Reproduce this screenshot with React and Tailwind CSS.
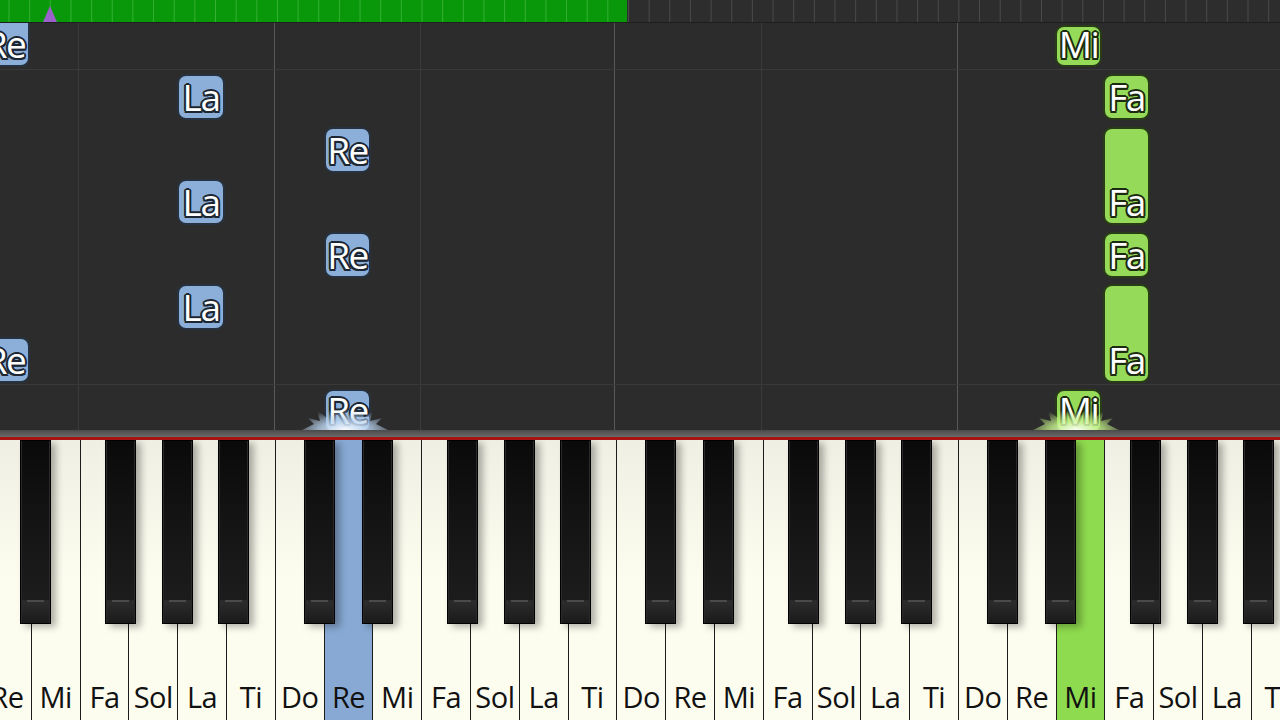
import React from "react";

const KEY_W = 48.8;
const KEY_START = -18;
const WHITE_NAMES = ["Re", "Mi", "Fa", "Sol", "La", "Ti", "Do"];

// pressed keys: index -> colour
const PRESSED = { 7: "blue", 22: "green" };

// notes in screen coordinates (x, width, y1, y2)
const notes = [
  { n: "Re", c: "blue", x: -20, w: 50, y1: -10, y2: 67 },
  { n: "La", c: "blue", x: 177, w: 48, y1: 74, y2: 120 },
  { n: "Re", c: "blue", x: 324, w: 47, y1: 127, y2: 173 },
  { n: "La", c: "blue", x: 177, w: 48, y1: 179, y2: 225 },
  { n: "Re", c: "blue", x: 324, w: 47, y1: 232, y2: 278 },
  { n: "La", c: "blue", x: 177, w: 48, y1: 284, y2: 330 },
  { n: "Re", c: "blue", x: -20, w: 50, y1: 337, y2: 383 },
  { n: "Re", c: "blue", x: 324, w: 47, y1: 389, y2: 433 },
  { n: "Mi", c: "green", x: 1055, w: 47, y1: 25, y2: 67 },
  { n: "Fa", c: "green", x: 1103, w: 47, y1: 74, y2: 120 },
  { n: "Fa", c: "green", x: 1103, w: 47, y1: 127, y2: 225 },
  { n: "Fa", c: "green", x: 1103, w: 47, y1: 232, y2: 278 },
  { n: "Fa", c: "green", x: 1103, w: 47, y1: 284, y2: 383 },
  { n: "Mi", c: "green", x: 1055, w: 47, y1: 389, y2: 433 },
];

const ROLL_TOP = 23;

const TopBar = () => {
  const ticks = [];
  for (let i = 0; i < 62; i++) ticks.push(9 + i * 20.65);
  return (
    <div className="h-[23px] bg-[#2b2b2b] shrink-0">
      <svg width="1280" height="23" className="block">
        <rect x="0" y="0" width="627" height="22" fill="#099809" />
        <rect x="627" y="0" width="653" height="22" fill="#2d2d2d" />
        {ticks.map((t, i) => (
          <line
            key={i}
            x1={t}
            x2={t}
            y1="0"
            y2="22"
            stroke={t < 627 ? "#36b036" : "#4a4a4a"}
            strokeWidth="1"
          />
        ))}
        <rect x="0" y="22" width="1280" height="1" fill="#1e1e1e" />
        <polygon points="43,22 50,6 57,22" fill="#9b62cc" />
      </svg>
    </div>
  );
};

const Note = ({ note }) => {
  const blue = note.c === "blue";
  return (
    <div
      className={
        "absolute rounded-[9px] border-2 flex items-end justify-center " +
        (blue
          ? "bg-[#8cafd9] border-[#273240]"
          : "bg-[#95db59] border-[#283d16]")
      }
      style={{
        left: note.x,
        width: note.w,
        top: note.y1 - ROLL_TOP,
        height: note.y2 - note.y1,
      }}
    >
      <span
        className={
          "font-['Open_Sans'] text-[37px] leading-[42px] tracking-[-1.5px] text-white " +
          (blue
            ? "[text-shadow:0_0_1px_#1d2733,2px_0_0_#1d2733,-2px_0_0_#1d2733,0_2px_0_#1d2733,0_-2px_0_#1d2733,1.5px_1.5px_0_#1d2733,-1.5px_-1.5px_0_#1d2733,1.5px_-1.5px_0_#1d2733,-1.5px_1.5px_0_#1d2733]"
            : "[text-shadow:0_0_1px_#1d2c10,2px_0_0_#1d2c10,-2px_0_0_#1d2c10,0_2px_0_#1d2c10,0_-2px_0_#1d2c10,1.5px_1.5px_0_#1d2c10,-1.5px_-1.5px_0_#1d2c10,1.5px_-1.5px_0_#1d2c10,-1.5px_1.5px_0_#1d2c10]")
        }
      >
        {note.n}
      </span>
    </div>
  );
};

const Burst = ({ x, color, id }) => (
  <svg
    width="90"
    height="36"
    className="absolute"
    style={{ left: x - 45, top: 430 - ROLL_TOP - 36 }}
  >
    <defs>
      <radialGradient id={id} cx="50%" cy="100%" r="65%">
        <stop offset="0%" stopColor="#ffffff" stopOpacity="0.95" />
        <stop offset="45%" stopColor={color} stopOpacity="0.8" />
        <stop offset="100%" stopColor={color} stopOpacity="0" />
      </radialGradient>
    </defs>
    <polygon
      points="2,36 14,30 8,24 20,27 17,16 27,24 28,8 34,22 38,12 42,22 46,4 50,22 55,12 58,22 62,8 64,24 73,16 70,27 82,24 76,30 88,36"
      fill={"url(#" + id + ")"}
    />
  </svg>
);

const Roll = () => (
  <div className="relative h-[407px] bg-[#2c2c2c] overflow-hidden shrink-0">
    <svg width="1280" height="407" className="absolute left-0 top-0">
      {[78, 420, 761].map((x) => (
        <line key={x} x1={x + 0.5} x2={x + 0.5} y1="0" y2="407" stroke="#3b3b3b" />
      ))}
      {[274, 614, 957].map((x) => (
        <line key={x} x1={x + 0.5} x2={x + 0.5} y1="0" y2="407" stroke="#595959" />
      ))}
      {[69, 384].map((y) => (
        <line key={y} x1="0" x2="1280" y1={y - ROLL_TOP + 0.5} y2={y - ROLL_TOP + 0.5} stroke="#393939" />
      ))}
    </svg>
    {notes.map((n, i) => (
      <Note key={i} note={n} />
    ))}
    <Burst x={345} color="#bcd6f2" id="gb" />
    <Burst x={1076} color="#c6f28c" id="gg" />
  </div>
);

const blackOffsets = [29, 87, 172, 229, 285];

const Keyboard = () => {
  const whites = [];
  for (let i = 0; i < 27; i++) whites.push(WHITE_NAMES[i % 7]);
  const blacks = [];
  for (let k = -1; k < 3; k++) {
    const doX = KEY_START + KEY_W * (6 + 7 * k);
    blackOffsets.forEach((o) => {
      const x = doX + o;
      if (x > -32 && x < 1280) blacks.push(x);
    });
  }
  return (
    <div className="relative h-[280px] overflow-hidden bg-[#fcfcef] shrink-0">
      <div className="flex h-full ml-[-18px]">
        {whites.map((name, i) => {
          const p = PRESSED[i];
          return (
            <div
              key={i}
              className={
                "w-[48.8px] shrink-0 h-full border-l border-[#1c1c1c] flex items-end justify-center pb-[3px] " +
                (p === "blue"
                  ? "bg-[#87a9d3]"
                  : p === "green"
                  ? "bg-[#8fdb4f]"
                  : "bg-gradient-to-b from-[#efefe3] via-[#fcfcef] to-[#fcfcef]")
              }
            >
              <span className="font-['Open_Sans'] text-[29px] leading-[40px] tracking-[-0.5px] text-[#111]">
                {name}
              </span>
            </div>
          );
        })}
      </div>
      {blacks.map((x, i) => (
        <div
          key={i}
          className="absolute top-0 w-[31px] h-[184px] bg-[#2a2a2a] border border-black shadow-[5px_3px_7px_rgba(0,0,0,0.3)] flex flex-col"
          style={{ left: x }}
        >
          <div className="flex-1 bg-gradient-to-b from-[#0a0a0a] via-[#141414] to-[#1c1c1c] mx-[1px]" />
          <div className="h-[2px] bg-[#4a4a4a] mx-[6px]" />
          <div className="h-[21px] bg-gradient-to-b from-[#2c2c2c] to-[#1a1a1a] mx-[1px]" />
        </div>
      ))}
    </div>
  );
};

export default function App() {
  return (
    <div className="w-[1280px] h-[720px] flex flex-col overflow-hidden bg-[#2c2c2c]">
      <TopBar />
      <Roll />
      <div className="h-[7px] bg-gradient-to-b from-[#4a4a4a] to-[#6a6a6a] shrink-0" />
      <div className="h-[3px] bg-[#a81414] shrink-0" />
      <Keyboard />
    </div>
  );
}
